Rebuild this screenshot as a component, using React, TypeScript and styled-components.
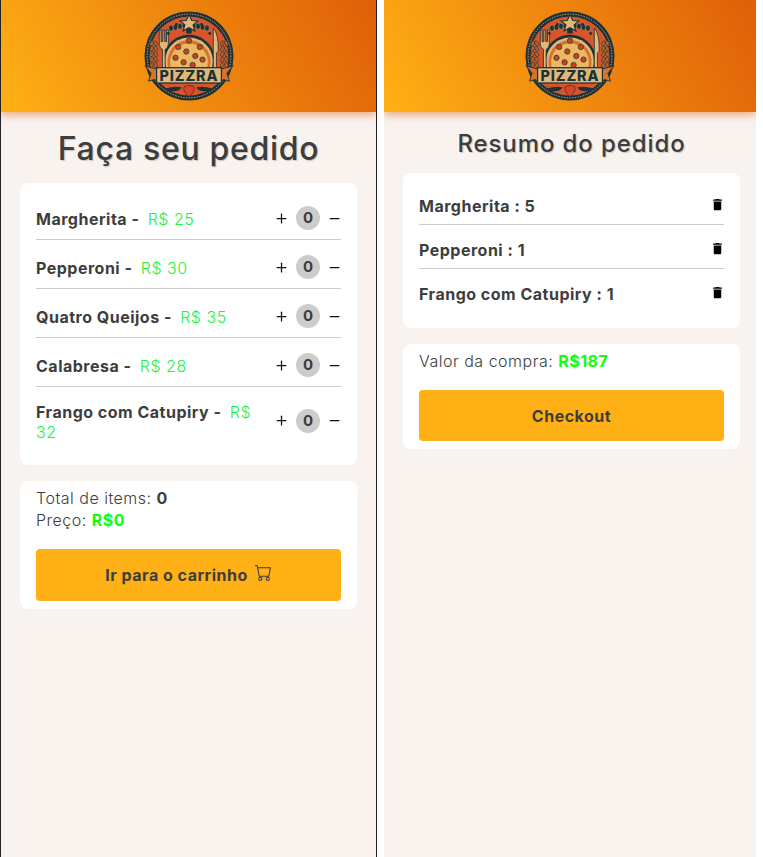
import * as React from 'react';
import styled, { createGlobalStyle } from 'styled-components';
import { BsCart } from 'react-icons/bs';
import { FiMinus, FiPlus } from 'react-icons/fi';
import { MdDelete } from 'react-icons/md';

const pizzas = [
    { name: 'Margherita', price: 25 },
    { name: 'Pepperoni', price: 30 },
    { name: 'Quatro Queijos', price: 35 },
    { name: 'Calabresa', price: 28 },
    { name: 'Frango com Catupiry', price: 32 },
];

const cart = [
    { name: 'Margherita', qty: 5 },
    { name: 'Pepperoni', qty: 1 },
    { name: 'Frango com Catupiry', qty: 1 },
];

const navy = '#1c3238';
const cream = '#e3b877';
const toppings = [[38, 40], [50, 33], [62, 40], [35, 52], [47, 45], [57, 50], [65, 54], [44, 57], [54, 60]];
const stars = [[27, 25], [36, 15], [64, 15], [73, 25]];
const wheatRows = [36, 42, 48, 54, 60];
const sprigRows = [30, 35, 40, 45];

const Logo = () =>
    <LogoSvg viewBox="0 0 100 100">
        <circle cx="50" cy="50" r="49.5" fill={navy} />
        <circle cx="50" cy="50" r="46.5" fill="none" stroke={cream} strokeWidth="1" strokeDasharray="1.5 1.5" />
        <circle cx="50" cy="50" r="44" fill="#d8552b" />
        {wheatRows.map(y =>
            <React.Fragment key={y}>
                <ellipse cx="8.5" cy={y} rx="1.8" ry="3" transform={`rotate(25 8.5 ${y})`} fill="#b5652a" stroke={navy} strokeWidth="0.6" />
                <ellipse cx="13" cy={y} rx="1.8" ry="3" transform={`rotate(-25 13 ${y})`} fill="#b5652a" stroke={navy} strokeWidth="0.6" />
                <ellipse cx="87" cy={y} rx="1.8" ry="3" transform={`rotate(25 87 ${y})`} fill="#b5652a" stroke={navy} strokeWidth="0.6" />
                <ellipse cx="91.5" cy={y} rx="1.8" ry="3" transform={`rotate(-25 91.5 ${y})`} fill="#b5652a" stroke={navy} strokeWidth="0.6" />
            </React.Fragment>
        )}
        {sprigRows.map(x =>
            <React.Fragment key={x}>
                <ellipse cx={x} cy={16 + (45 - x) * 0.2} rx="2.6" ry="3.4" fill={navy} stroke={cream} strokeWidth="0.4" />
                <ellipse cx={100 - x} cy={16 + (45 - x) * 0.2} rx="2.6" ry="3.4" fill={navy} stroke={cream} strokeWidth="0.4" />
            </React.Fragment>
        )}
        <path d="M23 66 A29 29 0 1 1 77 66 Z" fill={navy} />
        <path d="M25.5 66 A26.5 26.5 0 1 1 74.5 66 Z" fill={cream} />
        <path d="M28 66 A24 24 0 1 1 72 66 Z" fill="#d9742c" />
        <path d="M31 66 A21 21 0 1 1 69 66 Z" fill="#e9b964" />
        {toppings.map(([x, y]) =>
            <circle key={`${x}-${y}`} cx={x} cy={y} r="3" fill="#c9431f" stroke={navy} strokeWidth="0.7" />
        )}
        <path d="M17 21 h2 v13 h2 v-13 h2 v13 h2 v-13 h2 v16 q0 4 -3.5 5.5 v21 h-3 v-21 q-3.500 -1.500 -3.500 -5.500 Z" fill={cream} stroke={navy} strokeWidth="0.9" />
        <path d="M77 19 q6 6 5.500 26 l-2 1.500 v18 h-3.500 Z" fill={cream} stroke={navy} strokeWidth="0.9" />
        <rect x="47" y="15" width="6" height="10" fill={navy} />
        <polygon points="50,4 53,10.500 60,11 54.500,15.500 56.500,22 50,18.500 43.500,22 45.500,15.500 40,11 47,10.500" fill={cream} stroke={navy} strokeWidth="1.2" />
        {stars.map(([x, y]) =>
            <circle key={`${x}-${y}`} cx={x} cy={y} r="1.6" fill={navy} />
        )}
        <polygon points="1,61 16,65 16,80 12,76 5,78 8,69" fill="#d9742c" stroke={navy} strokeWidth="1" />
        <polygon points="99,61 84,65 84,80 88,76 95,78 92,69" fill="#d9742c" stroke={navy} strokeWidth="1" />
        <rect x="14" y="63" width="72" height="17" fill={cream} stroke={navy} strokeWidth="1.400" />
        <LogoText x="50" y="77.500" textAnchor="middle">PIZZRA</LogoText>
        <path d="M24 86 q11 -3 18 -1 q-7 8 -18 1 Z M76 86 q-11 -3 -18 -1 q7 8 18 1 Z" fill={navy} />
        <path d="M50 95 q-7 -5 -5.500 -11 q5.500 -3 11 0 q1.500 6 -5.500 11 Z" fill="#d9442a" stroke={navy} strokeWidth="0.7" />
    </LogoSvg>
;

const Header = () =>
    <Banner>
        <Logo />
    </Banner>
;

export default function App(): JSX.Element {
    return (
        <Page>
            <GlobalStyle />
            <OrderPanel>
                <Header />
                <OrderContent>
                    <OrderTitle>Faça seu pedido</OrderTitle>
                    <MenuCard>
                        {pizzas.map((pizza, index) =>
                            <MenuRow key={pizza.name} $last={index === pizzas.length - 1}>
                                <MenuText>
                                    <strong>{pizza.name} - </strong>
                                    <Price>R$ {pizza.price}</Price>
                                </MenuText>
                                <Counter>
                                    <StepIcon><FiPlus /></StepIcon>
                                    <Quantity>0</Quantity>
                                    <StepIcon><FiMinus /></StepIcon>
                                </Counter>
                            </MenuRow>
                        )}
                    </MenuCard>
                    <TotalCard>
                        <Line>Total de items: <strong>0</strong></Line>
                        <Line>Preço: <Amount>R$0</Amount></Line>
                        <CartButton>Ir para o carrinho <BsCart /></CartButton>
                    </TotalCard>
                </OrderContent>
            </OrderPanel>
            <SummaryPanel>
                <Header />
                <SummaryContent>
                    <SummaryTitle>Resumo do pedido</SummaryTitle>
                    <SummaryCard>
                        {cart.map((item, index) =>
                            <SummaryRow key={item.name} $last={index === cart.length - 1}>
                                <strong>{item.name} : {item.qty}</strong>
                                <TrashIcon><MdDelete /></TrashIcon>
                            </SummaryRow>
                        )}
                    </SummaryCard>
                    <TotalCard>
                        <Line>Valor da compra: <Amount>R$187</Amount></Line>
                        <CheckoutButton>Checkout</CheckoutButton>
                    </TotalCard>
                </SummaryContent>
            </SummaryPanel>
        </Page>
    );
}

const GlobalStyle = createGlobalStyle`
    * {
        box-sizing: border-box;
    }

    body {
        margin: 0;
        background: #fff;
        color: #3d3d3d;
        font-family: 'Inter', 'Liberation Sans', sans-serif;
    }
`;

const Page = styled.div`
    display: flex;
    height: 857px;
    overflow: hidden;
`;

const OrderPanel = styled.div`
    width: 377px;
    overflow: hidden;
    background: #f9f3ef;
    border-left: 1px solid #222;
    border-right: 1px solid #222;
`;

const SummaryPanel = styled.div`
    width: 372px;
    margin-left: 7px;
    overflow: hidden;
    background: #f9f3ef;
`;

const Banner = styled.header`
    display: flex;
    justify-content: center;
    align-items: center;
    height: 112px;
    background: linear-gradient(60deg, #ffb014 0%, #e05f08 100%);
    box-shadow: 0 3px 8px rgba(224, 95, 8, 0.5);
`;

const LogoSvg = styled.svg`
    width: 90px;
    height: 90px;
`;

const LogoText = styled.text`
    font-family: 'Inter', sans-serif;
    font-size: 16px;
    font-weight: 800;
    letter-spacing: 1px;
    fill: ${navy};
`;

const OrderContent = styled.main`
    display: flex;
    flex-direction: column;
    padding: 0 19px;
`;

const SummaryContent = styled.main`
    display: flex;
    flex-direction: column;
    padding: 0 16px 0 19px;
`;

const OrderTitle = styled.h1`
    margin: 17px 0 15px;
    text-align: center;
    font-size: 32px;
    line-height: 39px;
    font-weight: 500;
    letter-spacing: 0.7px;
    text-shadow: 1px 1px 1px rgba(0, 0, 0, 0.2);
`;

const SummaryTitle = styled.h2`
    margin: 16px 0 14px;
    text-align: center;
    font-size: 24px;
    line-height: 31px;
    font-weight: 500;
    letter-spacing: 0.9px;
    text-shadow: 1px 1px 1px rgba(0, 0, 0, 0.2);
`;

const Card = styled.section`
    background: #fff;
    border-radius: 8px;
    padding: 8px 16px;
    font-size: 16px;
    line-height: 22px;
`;

const MenuCard = styled(Card)`
    line-height: 19.5px;
`;

const MenuRow = styled.div<{ $last: boolean }>`
    display: flex;
    align-items: center;
    justify-content: space-between;
    gap: 10px;
    padding: ${p => (p.$last ? '16px 0 15px' : '19px 0 9px')};
    height: ${p => (p.$last ? 'auto' : '49px')};
    border-bottom: ${p => (p.$last ? 'none' : '1px solid #ccc')};
`;

const MenuText = styled.span`
    flex: 1;
    letter-spacing: 0.5px;

    strong {
        font-weight: 700;
        margin-right: 4px;
    }
`;

const Price = styled.span`
    color: #22f03c;
    font-weight: 300;
`;

const Counter = styled.div`
    display: flex;
    align-items: center;
    gap: 7px;
    margin: -4px -1px 0 0;
`;

const StepIcon = styled.span`
    display: flex;
    color: #111;
    font-size: 15px;
`;

const Quantity = styled.span`
    display: flex;
    justify-content: center;
    align-items: center;
    width: 24px;
    height: 24px;
    border-radius: 50%;
    background: #ccc;
    font-weight: 700;
    font-size: 15px;
`;

const TotalCard = styled(Card)`
    margin-top: 16px;
    padding-top: 6px;
`;

const Line = styled.div`
    font-weight: 300;
    letter-spacing: 0.5px;

    strong {
        font-weight: 700;
    }
`;

const Amount = styled.strong`
    color: #0dff0d;
    font-weight: 700;
`;

const ActionButton = styled.button`
    display: flex;
    justify-content: center;
    align-items: center;
    gap: 7px;
    width: 100%;
    margin-top: 18px;
    border: none;
    border-radius: 4px;
    background: #ffb014;
    color: #3d3d3d;
    font-family: inherit;
    font-size: 16px;
    font-weight: 700;
    letter-spacing: 0.5px;
`;

const CartButton = styled(ActionButton)`
    height: 52px;

    svg {
        font-size: 17px;
        margin-top: -5px;
    }
`;

const CheckoutButton = styled(ActionButton)`
    height: 51px;
`;

const SummaryCard = styled(Card)`
    padding-bottom: 15px;
    line-height: 20px;
`;

const SummaryRow = styled.div<{ $last: boolean }>`
    display: flex;
    justify-content: space-between;
    align-items: flex-start;
    height: 44px;
    padding-top: 15px;
    letter-spacing: 0.5px;
    border-bottom: ${p => (p.$last ? 'none' : '1px solid #ccc')};

    strong {
        font-weight: 700;
    }
`;

const TrashIcon = styled.span`
    display: flex;
    color: #000;
    font-size: 15px;
    margin: 1px -1px 0 0;
`;
